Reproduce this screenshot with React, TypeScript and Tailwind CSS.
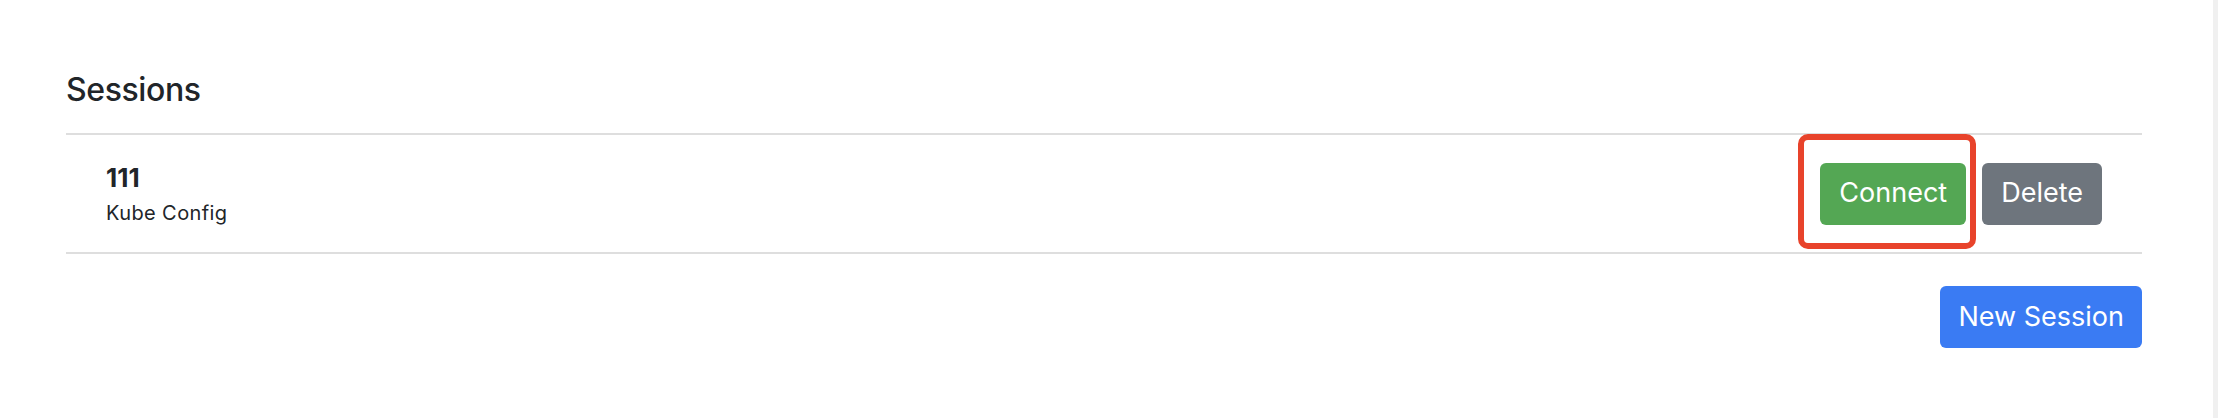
import React from "react";

const sessions = [{ name: "111", kind: "Kube Config" }];

export default function App() {
  return (
    <div className="flex h-[418px] w-full bg-white font-['Inter',sans-serif] text-[#212529]">
      <main className="flex-1 pl-[66px] pr-[71px] pt-[70px]">
        <h4 className="mb-[23px] text-[32px] font-medium leading-[40px] tracking-[-0.4px]">
          Sessions
        </h4>

        <ul className="border-y-2 border-[#dedede]">
          {sessions.map((s) => (
            <li
              key={s.name}
              className="flex h-[117px] items-center justify-between px-[40px]"
            >
              <div className="mt-[2px]">
                <div className="text-[26px] font-bold leading-[32px]">
                  {s.name}
                </div>
                <div className="mt-[5px] text-[20px] leading-[28px] tracking-[0.4px]">
                  {s.kind}
                </div>
              </div>

              <div className="flex items-center gap-[16px]">
                <div className="relative">
                  <button className="h-[62px] rounded-[6px] bg-[#54a754] px-[19px] text-[27px] text-white">
                    Connect
                  </button>
                  {/* highlight annotation */}
                  <span className="pointer-events-none absolute -bottom-[24px] -left-[22px] -right-[10px] -top-[29px] rounded-[10px] border-[6px] border-[#e8432b]" />
                </div>
                <button className="h-[62px] rounded-[6px] bg-[#6e757d] px-[19px] text-[27px] text-white">
                  Delete
                </button>
              </div>
            </li>
          ))}
        </ul>

        <div className="mt-[32px] flex justify-end">
          <button className="h-[62px] rounded-[6px] bg-[#3a7bf3] px-[18px] text-[27px] text-white">
            New Session
          </button>
        </div>
      </main>
      <div className="w-[5px] bg-[#f0f0f0]" />
    </div>
  );
}
